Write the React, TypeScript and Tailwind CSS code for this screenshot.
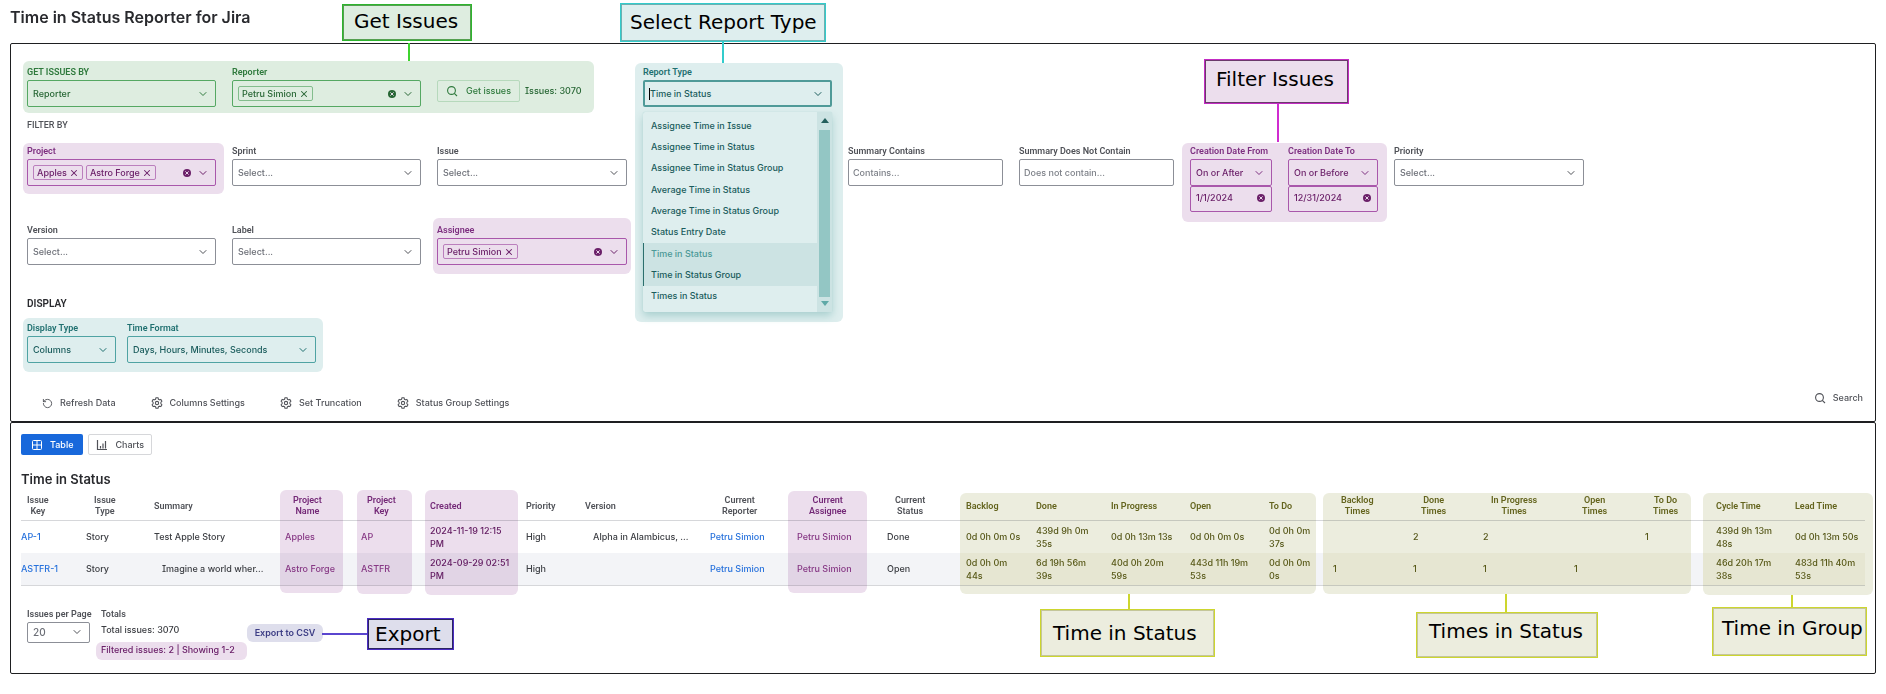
import type { ReactNode } from 'react';
import { ChevronDown, RotateCcw, X } from 'lucide-react';

type Tone = 'plain' | 'green' | 'purple' | 'teal';

const label = "block h-4 whitespace-nowrap font-[Roboto,sans-serif] text-[9px] leading-4 font-semibold";

const labelTone: Record<Tone, string> = {
  plain: 'text-[#505258]',
  green: 'text-[#2f7a3d]',
  purple: 'text-[#7d2f80]',
  teal: 'text-[#1f7070]',
};

const boxTone: Record<Tone, string> = {
  plain: 'border-[#8c8f97] text-[#6b6e76]',
  green: 'border-[#55a863] text-[#276634]',
  purple: 'border-[#a957ab] text-[#6b2069]',
  teal: 'border-[#4fa3a3] text-[#1a5c5c]',
};

const chipTone: Record<Tone, string> = {
  plain: 'border-[#8c8f97]',
  green: 'border-[#83bd8d]',
  purple: 'border-[#bb7fbd]',
  teal: 'border-[#4fa3a3]',
};

const reportTypes = [
  'Assignee Time in Issue',
  'Assignee Time in Status',
  'Assignee Time in Status Group',
  'Average Time in Status',
  'Average Time in Status Group',
  'Status Entry Date',
  'Time in Status',
  'Time in Status Group',
  'Times in Status',
];

type Column = { title: string; width: number; tone?: 'purple' | 'olive'; head?: string };

const columns: Column[] = [
  { title: 'Issue\nKey', width: 65, head: 'pl-1.5' },
  { title: 'Issue\nType', width: 68, head: 'pl-2' },
  { title: 'Summary', width: 131 },
  { title: 'Project\nName', width: 76, tone: 'purple', head: 'pl-2' },
  { title: 'Project\nKey', width: 69, tone: 'purple', head: 'pl-1.5' },
  { title: 'Created', width: 96, tone: 'purple' },
  { title: 'Priority', width: 59 },
  { title: 'Version', width: 125 },
  { title: 'Current\nReporter', width: 87, head: 'pl-3' },
  { title: 'Current\nAssignee', width: 90, tone: 'purple', head: 'pl-3' },
  { title: 'Current\nStatus', width: 79, head: 'pl-2' },
  { title: 'Backlog', width: 70, tone: 'olive' },
  { title: 'Done', width: 75, tone: 'olive' },
  { title: 'In Progress', width: 79, tone: 'olive' },
  { title: 'Open', width: 79, tone: 'olive' },
  { title: 'To Do', width: 64, tone: 'olive' },
  { title: 'Backlog\nTimes', width: 80, tone: 'olive', head: 'pl-2' },
  { title: 'Done\nTimes', width: 70, tone: 'olive', head: 'pl-2' },
  { title: 'In Progress\nTimes', width: 91, tone: 'olive', head: 'pl-2' },
  { title: 'Open\nTimes', width: 71, tone: 'olive', head: 'pl-2' },
  { title: 'To Do\nTimes', width: 71, tone: 'olive', head: 'pl-2' },
  { title: 'Cycle Time', width: 79, tone: 'olive' },
  { title: 'Lead Time', width: 70, tone: 'olive' },
];

const rows = [
  [
    'AP-1', 'Story', 'Test Apple Story', 'Apples', 'AP', '2024-11-19 12:15\nPM', 'High',
    'Alpha in Alambicus, ...', 'Petru Simion', 'Petru Simion', 'Done',
    '0d 0h 0m 0s', '439d 9h 0m\n35s', '0d 0h 13m 13s', '0d 0h 0m 0s', '0d 0h 0m\n37s',
    '', '2', '2', '', '1', '439d 9h 13m\n48s', '0d 0h 13m 50s',
  ],
  [
    'ASTFR-1', 'Story', 'Imagine a world wher...', 'Astro Forge', 'ASTFR', '2024-09-29 02:51\nPM', 'High',
    '', 'Petru Simion', 'Petru Simion', 'Open',
    '0d 0h 0m\n44s', '6d 19h 56m\n39s', '40d 0h 20m\n59s', '443d 11h 19m\n53s', '0d 0h 0m\n0s',
    '1', '1', '1', '1', '', '46d 20h 17m\n38s', '483d 11h 40m\n53s',
  ],
];

function Chevron({ className = '' }: { className?: string }) {
  return <ChevronDown className={`pointer-events-none h-3 w-3 shrink-0 ${className}`} strokeWidth={2} aria-hidden />;
}

function SearchIcon() {
  return (
    <svg viewBox="0 0 12 12" className="h-3 w-3" fill="none" stroke="currentColor" strokeWidth="1.1" aria-hidden>
      <circle cx="5.5" cy="5.5" r="3.9" />
      <path d="M8.3 8.3 11 11" />
    </svg>
  );
}

function GearIcon() {
  return (
    <svg viewBox="0 0 16 16" className="h-3 w-3" fill="none" stroke="currentColor" strokeWidth="1.4" strokeLinejoin="round" aria-hidden>
      <path d="M6.6 1h2.8l.5 2 1.3.8 2-.6 1.4 2.4L13.2 7v2l1.4 1.4-1.4 2.4-2-.6-1.3.8-.5 2H6.6l-.5-2-1.3-.8-2 .6-1.4-2.4L2.8 9V7L1.4 5.6l1.4-2.4 2 .6L6.1 3z" />
      <circle cx="8" cy="8" r="2.2" />
    </svg>
  );
}

function ClearButton({ name }: { name: string }) {
  return (
    <button type="button" aria-label={name} className="shrink-0">
      <svg viewBox="0 0 10 10" className="h-2 w-2" aria-hidden>
        <circle cx="5" cy="5" r="5" fill="currentColor" />
        <path d="m3 3 4 4m0-4L3 7" stroke="#ecdeed" strokeWidth="1.2" />
      </svg>
    </button>
  );
}

type SelectProps = { id: string; title: string; value: string; width: string; tone?: Tone; size?: string };

function SelectField({ id, title, value, width, tone = 'plain', size = 'h-[27px]' }: SelectProps) {
  return (
    <div className={`shrink-0 ${width}`}>
      <label htmlFor={id} className={`${label} ${labelTone[tone]}`}>{title}</label>
      <div className="relative">
        <select id={id} className={`block w-full appearance-none rounded-xs border pl-[5px] pr-6 ${boxTone[tone]} ${size}`}>
          <option>{value}</option>
        </select>
        <Chevron className={`absolute top-1/2 right-[7px] -translate-y-1/2 ${labelTone[tone]}`} />
      </div>
    </div>
  );
}

function ChipField({ id, title, values, tone, width = 'w-[189px]' }: { id: string; title: string; values: string[]; tone: Tone; width?: string }) {
  return (
    <div className={`shrink-0 ${width}`}>
      <label htmlFor={id} className={`${label} ${labelTone[tone]}`}>{title}</label>
      <div className={`flex h-[27px] items-center gap-[3px] rounded-xs border pr-1.5 pl-[5px] ${boxTone[tone]}`}>
        {values.map((v) => (
          <span key={v} className={`flex h-[15px] items-center gap-0.5 rounded-xs border px-[3px] whitespace-nowrap ${chipTone[tone]}`}>
            {v}
            <button type="button" aria-label={`Remove ${v}`}><X className="h-2.5 w-2.5" strokeWidth={2.5} /></button>
          </span>
        ))}
        <input id={id} className="w-1 min-w-0 flex-1 bg-transparent outline-none" />
        <ClearButton name={`Clear ${title}`} />
        <Chevron className="ml-[3px]" />
      </div>
    </div>
  );
}

function TextField({ id, title, placeholder }: { id: string; title: string; placeholder: string }) {
  return (
    <div className="w-[155px] shrink-0">
      <label htmlFor={id} className={`${label} ${labelTone.plain}`}>{title}</label>
      <input id={id} placeholder={placeholder} className="block h-[27px] w-full rounded-xs border border-[#8c8f97] px-1 placeholder:text-[#7d8088]" />
    </div>
  );
}

function DateField({ id, title, mode, date, width }: { id: string; title: string; mode: string; date: string; width: string }) {
  return (
    <div className={`shrink-0 ${width}`}>
      <SelectField id={id} title={title} value={mode} width="w-full" tone="purple" />
      <div className={`flex h-[26px] items-center rounded-xs border pr-1.5 pb-0.5 pl-[5px] ${boxTone.purple}`}>
        <input aria-label={`${title} value`} defaultValue={date} className="w-0 min-w-0 flex-1 bg-transparent outline-none" />
        <ClearButton name={`Clear ${title}`} />
      </div>
    </div>
  );
}

function ReportType() {
  return (
    <div className="relative ml-[41px] w-52">
      <div className="absolute top-0.5 left-0 z-10 h-[259px] w-full rounded-md bg-[#deeeee] pt-px pr-[11px] pl-2">
        <label htmlFor="report-type" className={`${label} ${labelTone.teal}`}>Report Type</label>
        <div className="relative flex h-[27px] items-center rounded-xs border-2 border-[#4f9a98] pr-1.5 pl-1 text-[#1a5c5c]">
          <span className="h-3 w-px bg-black" />
          <input id="report-type" role="combobox" aria-expanded="true" aria-controls="report-list" defaultValue="Time in Status" className="w-0 min-w-0 flex-1 bg-transparent outline-none" />
          <Chevron />
        </div>
        <div className="mt-[5px] flex h-[200px] rounded-xs shadow-[0_4px_8px_#a9d0cf,0_0_1px_#a9d0cf]">
          <ul id="report-list" role="listbox" className="flex flex-1 flex-col pt-[3px] pb-[5px]">
            {reportTypes.map((t, i) => (
              <li
                key={t}
                role="option"
                aria-selected={i === 6}
                className={`flex flex-1 items-center border-l pl-[7px] ${
                  i === 6
                    ? 'border-[#2b6f6d] bg-[#cce3e3] text-[#4b9997]'
                    : i === 7
                      ? 'border-[#2b6f6d] bg-[#cce3e3] text-[#1a5c5c]'
                      : 'border-transparent text-[#1a5c5c]'
                }`}
              >
                {t}
              </li>
            ))}
          </ul>
          <div className="flex w-[15px] flex-col items-center bg-[#cce3e3] py-1.5">
            <svg viewBox="0 0 8 5" className="h-[5px] w-2 fill-[#245f5d]" aria-hidden><path d="M4 0l4 5H0z" /></svg>
            <span className="mt-[7px] mb-1 w-[11px] flex-1 bg-[#93c6c4]" />
            <svg viewBox="0 0 8 5" className="h-[5px] w-2 fill-[#5fa9a7]" aria-hidden><path d="M4 5l4-5H0z" /></svg>
          </div>
        </div>
      </div>
    </div>
  );
}

function ToolButton({ icon, children }: { icon: ReactNode; children: ReactNode }) {
  return (
    <button type="button" className="flex h-6 items-center gap-[7px] whitespace-nowrap text-[#505258]">
      {icon}
      {children}
    </button>
  );
}

// Callout box of the guide, placed over the page
function Callout({ className, children }: { className: string; children: ReactNode }) {
  return (
    <div className={`absolute z-20 flex items-center border font-['DejaVu_Sans',sans-serif] text-xl leading-6 font-normal whitespace-nowrap text-black ${className}`}>
      {children}
    </div>
  );
}

function IssueTable() {
  return (
    <table className="w-full table-fixed border-collapse text-left">
      <colgroup>
        {columns.map((c) => <col key={c.title} style={{ width: c.width }} />)}
      </colgroup>
      <thead>
        <tr className="h-[30px] border-b border-[#d6d7da]">
          {columns.map((c) => (
            <th
              key={c.title}
              className={`p-0 pt-[3px] font-[Roboto,sans-serif] text-[9px] leading-[11px] font-semibold whitespace-pre ${c.head ?? ''} ${
                c.tone === 'purple' ? 'text-[#7d2f80]' : c.tone === 'olive' ? 'text-[#6c6c22]' : 'text-[#505258]'
              }`}
            >
              <span className="inline-block text-center align-middle">{c.title}</span>
            </th>
          ))}
        </tr>
      </thead>
      <tbody>
        {rows.map((row, r) => (
          <tr key={row[0]} className={r === 1 ? 'h-8 border-b border-[#d6d7da] bg-[#f3f4f7]' : 'h-[33px]'}>
            {row.map((cell, i) => {
              const tone = columns[i].tone;
              const isLink = i === 0 || i === 3 || i === 4 || i === 8 || i === 9;
              const color =
                tone === 'purple' ? (isLink ? 'text-[#92408f]' : 'text-[#6b2069]')
                : tone === 'olive' ? 'text-[#5d5e1c]'
                : isLink ? 'text-[#2671dc]' : 'text-[#3b3d42]';
              const indent = (r === 1 && i === 2) || i === 7 ? 'pl-2' : '';
              return (
                <td key={i} className={`p-0 leading-[13px] whitespace-pre ${color} ${indent}`}>
                  {isLink ? <a href="#issue">{cell}</a> : cell}
                </td>
              );
            })}
          </tr>
        ))}
      </tbody>
    </table>
  );
}

const purpleMark = 'pointer-events-none absolute rounded-md bg-[#ecdeed] mix-blend-multiply';

// Olive highlight, a shade warmer over the striped row
function OliveMark({ className, stripe = '' }: { className: string; stripe?: string }) {
  return (
    <div className={`pointer-events-none absolute top-[3px] rounded-md bg-[#ecedde] pt-[60px] mix-blend-multiply ${className}`}>
      <div className={`h-8 bg-[#f2f1d9] ${stripe}`} />
    </div>
  );
}

export default function App() {
  return (
    <main className="relative bg-white px-[10px] pb-5 font-[Inter,sans-serif] text-[9px] leading-4 font-medium text-[#292a2e] [font-feature-settings:'cv08']">
      <h1 className="flex h-[43px] items-center pb-2.5 text-base font-semibold">Time in Status Reporter for Jira</h1>

      <section className="rounded-xs border border-[#1e1f21] px-4 pt-[17px] pb-1.5">
        <div className="flex">
          <div className="-ml-1 flex gap-4 rounded-md bg-[#deede0] pt-[3px] pr-[11px] pb-1.5 pl-1">
            <SelectField id="issues-by" title="GET ISSUES BY" value="Reporter" width="w-[189px]" tone="green" />
            <ChipField id="reporter" title="Reporter" values={['Petru Simion']} tone="green" />
            <div className="mt-4 flex h-[22px] items-center gap-[5px] text-[#276634]">
              <button type="button" className="flex h-full w-[83px] items-center justify-center gap-2 rounded-xs border border-[#b6d9bc] text-[#2f7a3d]">
                <SearchIcon />
                Get issues
              </button>
              <span className="w-[58px] whitespace-nowrap">Issues: 3070</span>
            </div>
          </div>
          <ReportType />
        </div>

        <h2 className="mt-1 font-[Roboto,sans-serif] text-[#505258]">FILTER BY</h2>

        <div className="mt-2.5 flex items-start gap-4">
          <div className="-mr-2 -mb-2 -ml-1 rounded-md bg-[#ecdeed] pr-2 pb-2 pl-1">
            <ChipField id="project" title="Project" values={['Apples', 'Astro Forge']} tone="purple" />
          </div>
          <SelectField id="sprint" title="Sprint" value="Select..." width="w-[189px]" />
          <SelectField id="issue" title="Issue" value="Select..." width="w-[190px]" />
          <div className="w-[189px] shrink-0" />
          <TextField id="contains" title="Summary Contains" placeholder="Contains..." />
          <TextField id="not-contains" title="Summary Does Not Contain" placeholder="Does not contain..." />
          <div className="-mr-[9px] -mb-2.5 -ml-2 flex gap-4 rounded-md bg-[#ecdeed] pr-[9px] pb-2.5 pl-2">
            <DateField id="date-from" title="Creation Date From" mode="On or After" date="1/1/2024" width="w-[82px]" />
            <DateField id="date-to" title="Creation Date To" mode="On or Before" date="12/31/2024" width="w-[90px]" />
          </div>
          <SelectField id="priority" title="Priority" value="Select..." width="w-[190px]" />
        </div>

        <div className="mt-2.5 flex items-start gap-4">
          <SelectField id="version" title="Version" value="Select..." width="w-[189px]" />
          <SelectField id="label" title="Label" value="Select..." width="w-[189px]" />
          <div className="-mx-1 -mt-1 -mb-[9px] rounded-md bg-[#ecdeed] px-1 pt-1 pb-[9px]">
            <ChipField id="assignee" title="Assignee" values={['Petru Simion']} tone="purple" width="w-[190px]" />
          </div>
        </div>

        <h2 className="mt-[31px] font-[Roboto,sans-serif] text-[10px] font-semibold">DISPLAY</h2>
        <div className="mt-2 flex">
          <div className="-mx-1 -mt-0.5 -mb-[9px] flex gap-[11px] rounded-md bg-[#deeeee] pt-0.5 pr-[7px] pb-[9px] pl-1">
            <SelectField id="display-type" title="Display Type" value="Columns" width="w-[89px]" tone="teal" />
            <SelectField id="time-format" title="Time Format" value="Days, Hours, Minutes, Seconds" width="w-[189px]" tone="teal" />
          </div>
        </div>

        <div className="mt-7 flex items-start pl-[15px]">
          <div className="flex gap-[35px]">
            <ToolButton icon={<RotateCcw className="h-[11px] w-[11px]" aria-hidden />}>Refresh Data</ToolButton>
            <ToolButton icon={<GearIcon />}>Columns Settings</ToolButton>
            <ToolButton icon={<GearIcon />}>Set Truncation</ToolButton>
            <ToolButton icon={<GearIcon />}>Status Group Settings</ToolButton>
          </div>
          <div className="-mt-[5px] -mr-1 ml-auto">
            <ToolButton icon={<SearchIcon />}>Search</ToolButton>
          </div>
        </div>
      </section>

      <section className="relative rounded-xs border border-[#1e1f21] px-[10px] pt-[11px] pb-[13px]">
        <div className="flex gap-[5px]">
          <button type="button" className="flex h-[21px] items-center gap-[7px] rounded-xs bg-[#1868db] px-2.5 text-white">
            <svg viewBox="0 0 12 12" className="h-3 w-3" fill="none" stroke="currentColor" aria-hidden>
              <rect x="1.5" y="1.5" width="9" height="9" rx="1" />
              <path d="M6 1.5v9M1.5 6h9" />
            </svg>
            Table
          </button>
          <button type="button" className="flex h-[21px] items-center gap-[7px] rounded-xs border border-[#d6d7da] px-[7px] text-[#505258]">
            <svg viewBox="0 0 12 12" className="h-3 w-3" fill="none" stroke="currentColor" aria-hidden>
              <path d="M1.5 1v9.5H11M4.5 7v2.5M7 4.5v5M9.5 2v7.5" strokeWidth="1.2" />
            </svg>
            Charts
          </button>
        </div>
        <h2 className="mt-3.5 pb-px text-[13px] leading-5 font-semibold">Time in Status</h2>

        <div className="relative">
          <IssueTable />
          <div className={`${purpleMark} top-0 left-[259px] h-[103px] w-[63px]`} />
          <div className={`${purpleMark} top-0 left-[336px] h-[104px] w-[55px]`} />
          <div className={`${purpleMark} top-0 left-[404px] h-[105px] w-[93px]`} />
          <div className={`${purpleMark} top-px left-[767px] h-[102px] w-[79px]`} />
          <OliveMark className="left-[939px] h-[101px] w-[356px]" />
          <OliveMark className="left-[1302px] h-[101px] w-[368px]" />
          <OliveMark className="-right-2 h-[102px] w-[170px]" stripe="mr-2" />
        </div>

        <div className="mt-5 flex items-start pl-1.5">
          <SelectField id="per-page" title="Issues per Page" value="20" width="w-[63px]" size="h-[21px] text-[10px] text-[#3b3d42]" />
          <div className="ml-[11px] text-[#3b3d42]">
            <p className={`${label} ${labelTone.plain}`}>Totals</p>
            <p className="leading-[15px]">Total issues: 3070</p>
            <p className="mt-[5px] -ml-[5px] h-[18px] w-[151px] rounded-md bg-[#ecdeed] pl-[5px] whitespace-nowrap text-[#6b2069]">Filtered issues: 2 | Showing 1-2</p>
          </div>
          <button type="button" className="mt-[18px] h-[18px] w-[76px] rounded-md bg-[#dedeec] font-semibold whitespace-nowrap text-[#3c3d85]">Export to CSV</button>
        </div>
      </section>

      <span className="absolute top-[43px] left-[408px] z-20 h-[18px] w-0.5 bg-[#3fd42f]" />
      <span className="absolute top-[42px] left-[722px] z-20 h-[21px] w-0.5 bg-[#33cccc]" />
      <span className="absolute top-[103px] left-[1277px] z-20 h-[39px] w-0.5 bg-[#d02cd0]" />
      <span className="absolute top-[633px] left-[322px] z-20 h-0.5 w-[45px] bg-[#5a45cf]" />
      <span className="absolute top-[594px] left-[1128px] z-20 h-[15px] w-0.5 bg-[#cdd62e]" />
      <span className="absolute top-[594px] left-[1505px] z-20 h-[18px] w-0.5 bg-[#cdd62e]" />
      <span className="absolute top-[595px] left-[1791px] z-20 h-[12px] w-0.5 bg-[#cdd62e]" />

      <Callout className="top-1 left-[342px] h-[37px] w-[130px] border-[#2eb42e] bg-[#deede0] pb-1 pl-[11px] shadow-[inset_0_0_0_1px_#55a050]">Get Issues</Callout>
      <Callout className="top-[3px] left-[620px] h-[39px] w-[206px] border-[#33cccc] bg-[#deeeee] pb-0.5 pl-[9px] shadow-[inset_0_0_0_1px_#6cb0b0]">Select Report Type</Callout>
      <Callout className="top-[59px] left-[1204px] h-[45px] w-[145px] border-[#c32cc3] bg-[#ecdeed] pb-1.5 pl-[11px] shadow-[inset_0_0_0_1px_#6b3a6b]">Filter Issues</Callout>
      <Callout className="top-[618px] left-[367px] h-8 w-[87px] border-[#4a2cc3] bg-[#dedeec] pl-[7px] shadow-[inset_0_0_0_1px_#2b2560]">Export</Callout>
      <Callout className="top-[609px] left-[1040px] h-12 w-[175px] border-[#cdd62e] bg-[#ecedde] pl-3 shadow-[inset_0_0_0_1px_#c4c69a]">Time in Status</Callout>
      <Callout className="top-[612px] left-[1416px] h-[46px] w-[182px] border-[#cdd62e] bg-[#ecedde] pb-2 pl-3 shadow-[inset_0_0_0_1px_#c4c69a]">Times in Status</Callout>
      <Callout className="top-[607px] left-[1712px] h-[49px] w-[155px] border-[#cdd62e] bg-[#ecedde] pb-2 pl-[9px] shadow-[inset_0_0_0_1px_#c4c69a]">Time in Group</Callout>
    </main>
  );
}
